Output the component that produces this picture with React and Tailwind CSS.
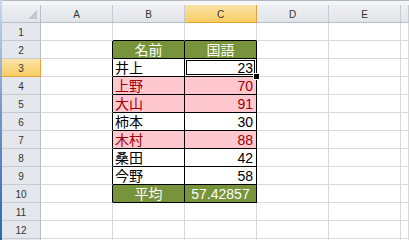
import React from "react";

const COLS = ["A", "B", "C", "D", "E", "F"];
const ROWS = [1, 2, 3, 4, 5, 6, 7, 8, 9, 10, 11, 12];

// B2:C10 table contents: [name, score, style]
const TABLE = {
  2: ["名前", "国語", "head"],
  3: ["井上", "23", "plain"],
  4: ["上野", "70", "pink"],
  5: ["大山", "91", "pink"],
  6: ["柿本", "30", "plain"],
  7: ["木村", "88", "pink"],
  8: ["桑田", "42", "plain"],
  9: ["今野", "58", "plain"],
  10: ["平均", "57.42857", "head"],
};

const FONT = "font-['Liberation_Sans','Noto_Sans_CJK_JP',sans-serif]";

function ColHeader({ col }) {
  const selected = col === "C";
  // column F is only a sliver at the right edge, its letter is clipped away
  const width = col === "F" ? "flex-1" : "w-[72px] shrink-0";
  const look = selected
    ? "bg-gradient-to-b from-[#fbe3a6] to-[#f6cd62] border-r-[#e2a33a] border-b-[#e2a33a]"
    : "bg-gradient-to-b from-[#eef0f3] to-[#e1e4e9] border-r-[#c6cbd2] border-b-[#b9bfc7]";
  return (
    <div
      className={`${width} h-full border-r border-b ${look} flex items-center justify-center pt-[2px] text-[10px] leading-none text-[#333333]`}
    >
      {col === "F" ? null : col}
    </div>
  );
}

function RowHeader({ row, label = true }) {
  const selected = row === 3;
  const look = selected
    ? "bg-gradient-to-b from-[#fbe3a6] to-[#f6cd62] border-r-[#e2a33a] border-b-[#e2a33a]"
    : "bg-[#e4e7ec] border-r-[#b9bfc7] border-b-[#c6cbd2]";
  return (
    <div
      className={`w-[39px] shrink-0 h-full border-r border-b ${look} flex items-center justify-center pt-[2px] text-[10px] leading-none text-[#333333]`}
    >
      {label ? row : null}
    </div>
  );
}

function Cell({ row, col }) {
  const inTable = (col === "B" || col === "C") && row >= 2 && row <= 10;
  const rightBlack = (col === "A" || col === "B" || col === "C") && row >= 2 && row <= 10;
  const bottomBlack = (col === "B" || col === "C") && row >= 1 && row <= 10;
  const width = col === "F" ? "flex-1" : "w-[72px] shrink-0";
  const rightColor = rightBlack ? "border-r-black" : "border-r-[#d9d9d9]";
  const bottomColor = bottomBlack ? "border-b-black" : "border-b-[#d9d9d9]";

  let fill = "bg-white text-black";
  let text = null;
  let align = "justify-start pl-[2px]";
  if (inTable) {
    const [name, score, kind] = TABLE[row];
    if (kind === "head") fill = "bg-[#77933c] text-white";
    if (kind === "pink") fill = "bg-[#ffc7ce] text-[#9c0006]";
    text = col === "B" ? name : score;
    if (kind === "head") align = "justify-center";
    else if (col === "C") align = "justify-end pr-[3px]";
  }

  const active = row === 3 && col === "C";

  return (
    <div
      className={`${width} h-full border-r border-b ${rightColor} ${bottomColor} ${fill} ${align} relative flex items-center pt-[1px] text-[14px] leading-none`}
    >
      {text}
      {active && (
        <>
          <div className="absolute left-[1px] top-[1px] right-[1px] bottom-[1px] border border-black pointer-events-none" />
          <div className="absolute right-[-3px] bottom-[-3px] w-[5px] h-[5px] bg-black outline outline-1 outline-white z-10" />
        </>
      )}
    </div>
  );
}

export default function App() {
  return (
    <div className={`flex w-[409px] h-[240px] overflow-hidden bg-white ${FONT}`}>
      <div className="w-[2px] shrink-0 bg-gradient-to-b from-[#c9d8ec] via-[#6f93c6] to-[#2d64b2]" />
      <div className="flex-1 flex flex-col min-w-0">
        <div className="h-[5px] shrink-0 border-t border-[#b3b9c1] bg-[#f5f6f8]" />
        <div className="h-[18px] shrink-0 flex">
          <div className="w-[39px] shrink-0 h-full border-r border-b border-r-[#b9bfc7] border-b-[#b9bfc7] bg-gradient-to-b from-[#eef0f3] to-[#e1e4e9] relative">
            <div className="absolute right-[3px] bottom-[3px] w-0 h-0 border-l-[9px] border-l-transparent border-b-[9px] border-b-[#c4c8ce]" />
          </div>
          {COLS.map((c) => (
            <ColHeader key={c} col={c} />
          ))}
        </div>
        {ROWS.map((r) => (
          <div key={r} className="h-[18px] shrink-0 flex">
            <RowHeader row={r} />
            {COLS.map((c) => (
              <Cell key={c} row={r} col={c} />
            ))}
          </div>
        ))}
        <div className="h-[18px] shrink-0 flex">
          <RowHeader row={13} label={false} />
          {COLS.map((c) => (
            <Cell key={c} row={13} col={c} />
          ))}
        </div>
      </div>
    </div>
  );
}
